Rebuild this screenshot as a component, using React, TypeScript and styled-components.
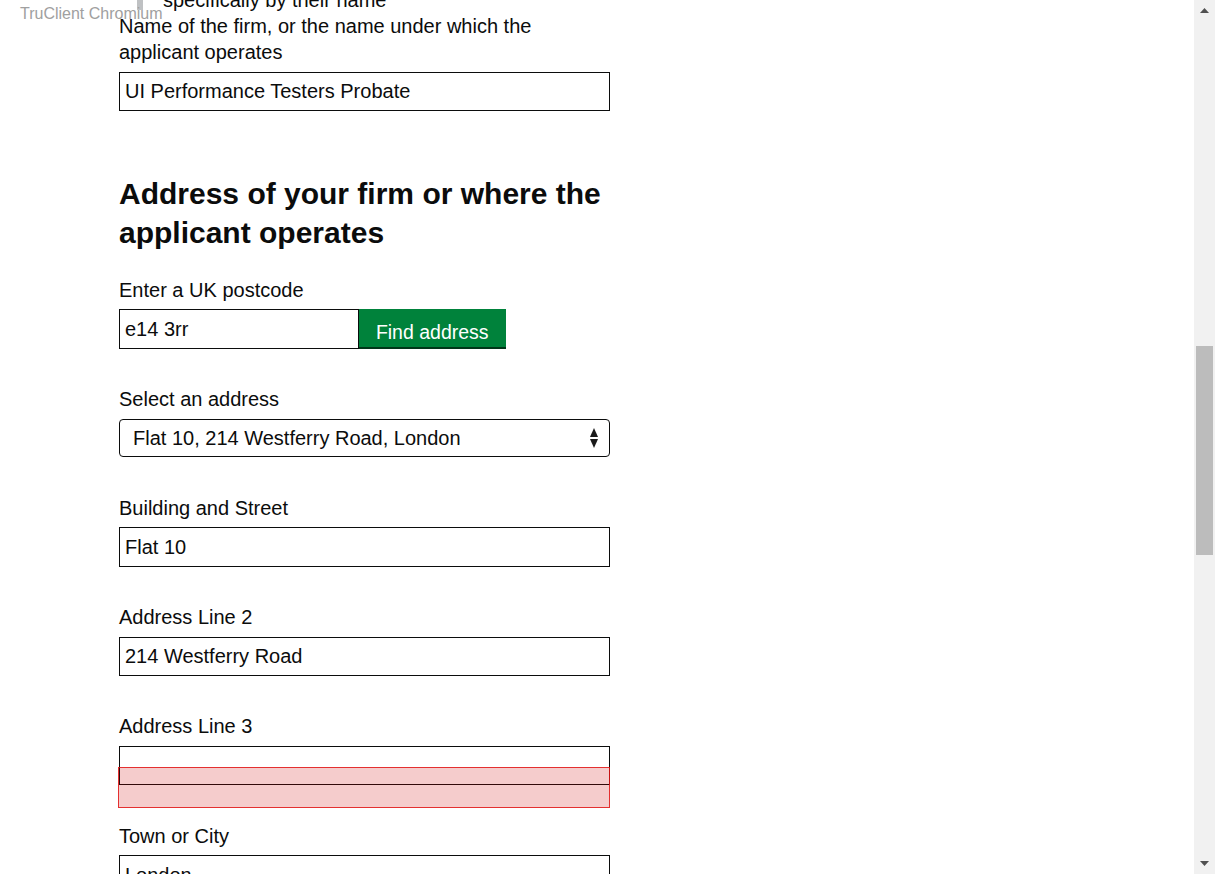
import React from "react";
import styled, { createGlobalStyle } from "styled-components";

const GlobalStyle = createGlobalStyle`
  html, body { margin: 0; padding: 0; height: 100%; overflow: hidden; background: #fff; }
  body { font-family: "Liberation Sans", Arial, sans-serif; color: #0b0c0c; }
  *, *::before, *::after { box-sizing: border-box; }
`;

const Screen = styled.div`
  display: flex;
  width: 1215px;
  height: 874px;
`;

const Viewport = styled.main`
  position: relative;
  flex: 1;
  overflow: hidden;
  background: #fff;
`;

const Watermark = styled.div`
  position: absolute;
  left: 20px;
  top: 5px;
  font-size: 16px;
  line-height: 18px;
  color: #a0a0a0;
  white-space: nowrap;
  z-index: 3;
  pointer-events: none;
`;

const Column = styled.div`
  width: 491px;
  margin-left: 119px;
`;

const Inset = styled.div`
  margin: -13px 0 0 18px;
  padding-left: 20px;
  border-left: 6px solid #bfc1c3;
  height: 23px;
  font-size: 20px;
  line-height: 26px;
`;

const FieldGroup = styled.div<{ $top?: number; $bottom?: number }>`
  position: relative;
  margin-top: ${(p) => p.$top ?? 0}px;
  margin-bottom: ${(p) => p.$bottom ?? 37.4}px;
`;

const Label = styled.label`
  display: block;
  font-size: 20px;
  line-height: 26px;
  margin-bottom: 6.5px;
`;

const TextInput = styled.input<{ $width?: number; $height?: number }>`
  display: block;
  width: ${(p) => (p.$width ? `${p.$width}px` : "100%")};
  height: ${(p) => p.$height ?? 39.5}px;
  margin: 0;
  padding: 1px 5px 0;
  border: 1px solid #0b0c0c;
  border-radius: 0;
  background: #fff;
  color: #0b0c0c;
  font: 20px "Liberation Sans", Arial, sans-serif;
  outline: none;
`;

const Heading = styled.h2`
  margin: 0 0 25px;
  font-size: 30px;
  line-height: 39px;
  font-weight: 700;
`;

const PostcodeRow = styled.div`
  display: flex;
  align-items: flex-start;
`;

const FindButton = styled.button`
  width: 147.5px;
  height: 38px;
  margin: 0;
  padding: 8px 0 0;
  border: 0;
  border-radius: 0;
  background: #00823b;
  box-shadow: 0 2px 0 #003618;
  color: #fff;
  font: 19.5px "Liberation Sans", Arial, sans-serif;
  line-height: 22px;
  cursor: pointer;
`;

const SelectWrap = styled.div`
  position: relative;
`;

const Select = styled.select`
  display: block;
  width: 100%;
  height: 38px;
  margin: 0;
  padding: 0 30px 0 13px;
  border: 1px solid #0b0c0c;
  border-radius: 4px;
  background: #fff;
  color: #0b0c0c;
  font: 20px "Liberation Sans", Arial, sans-serif;
  appearance: none;
  -webkit-appearance: none;
  outline: none;
`;

const SelectArrows = styled.svg`
  position: absolute;
  right: 12px;
  top: 9px;
  pointer-events: none;
`;

const Highlight = styled.div`
  position: absolute;
  left: -1px;
  right: 0;
  top: 53.7px;
  height: 40.5px;
  background: rgba(204, 0, 0, 0.2);
  border: 1px solid rgba(225, 20, 20, 0.85);
  pointer-events: none;
`;

const Scrollbar = styled.div`
  width: 21px;
  background: #f1f1f1;
  display: flex;
  flex-direction: column;
`;

const ScrollButton = styled.div`
  height: 21px;
  display: flex;
  align-items: center;
  justify-content: center;
`;

const Track = styled.div`
  flex: 1;
  padding: 0 2px;
`;

const Thumb = styled.div<{ $offset: number; $size: number }>`
  margin-top: ${(p) => p.$offset}px;
  height: ${(p) => p.$size}px;
  background: #bcbcbc;
`;

const Arrow = ({ down }: { down?: boolean }) => (
  <svg width="9" height="5" viewBox="0 0 9 5">
    <polygon points={down ? "0,0 9,0 4.5,5" : "0,5 4.5,0 9,5"} fill="#505050" />
  </svg>
);

export default function App() {
  return (
    <>
      <GlobalStyle />
      <Screen>
        <Viewport>
          <Watermark>TruClient Chromium</Watermark>
          <Column>
            <Inset>specifically by their name</Inset>

            <FieldGroup $top={3} $bottom={62.5}>
              <Label>Name of the firm, or the name under which the applicant operates</Label>
              <TextInput defaultValue="UI Performance Testers Probate" />
            </FieldGroup>

            <Heading>Address of your firm or where the applicant operates</Heading>

            <FieldGroup $bottom={37}>
              <Label>Enter a UK postcode</Label>
              <PostcodeRow>
                <TextInput $width={239.5} $height={40} defaultValue="e14 3rr" />
                <FindButton type="button">Find address</FindButton>
              </PostcodeRow>
            </FieldGroup>

            <FieldGroup $bottom={38.2}>
              <Label>Select an address</Label>
              <SelectWrap>
                <Select defaultValue="flat10">
                  <option value="flat10">Flat 10, 214 Westferry Road, London</option>
                </Select>
                <SelectArrows width="8" height="20" viewBox="0 0 8 20">
                  <polygon points="0,9 4,0 8,9" fill="#1a1a1a" />
                  <polygon points="0,11 8,11 4,20" fill="#1a1a1a" />
                </SelectArrows>
              </SelectWrap>
            </FieldGroup>

            <FieldGroup>
              <Label>Building and Street</Label>
              <TextInput defaultValue="Flat 10" />
            </FieldGroup>

            <FieldGroup>
              <Label>Address Line 2</Label>
              <TextInput defaultValue="214 Westferry Road" />
            </FieldGroup>

            <FieldGroup>
              <Label>Address Line 3</Label>
              <TextInput defaultValue="" />
              <Highlight />
            </FieldGroup>

            <FieldGroup>
              <Label>Town or City</Label>
              <TextInput defaultValue="London" />
            </FieldGroup>
          </Column>
        </Viewport>
        <Scrollbar>
          <ScrollButton>
            <Arrow />
          </ScrollButton>
          <Track>
            <Thumb $offset={325} $size={209} />
          </Track>
          <ScrollButton>
            <Arrow down />
          </ScrollButton>
        </Scrollbar>
      </Screen>
    </>
  );
}
